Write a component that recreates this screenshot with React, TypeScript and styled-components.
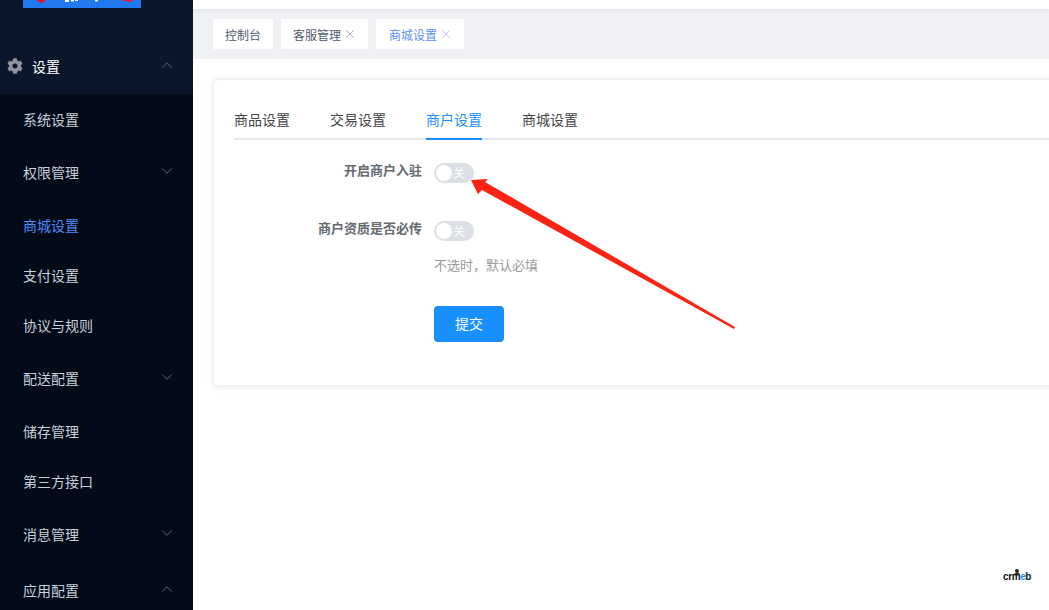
import React from "react";
import styled, { createGlobalStyle } from "styled-components";
import { ChevronDown, ChevronUp, X } from "lucide-react";
import { FaCog } from "react-icons/fa";

const GlobalStyle = createGlobalStyle`
  html, body {
    margin: 0;
    height: 100%;
    overflow: hidden;
    background: #fff;
    font-family: "Noto Sans CJK SC", "Liberation Sans", sans-serif;
  }
`;

const Page = styled.div`
  display: flex;
  width: 1049px;
  height: 610px;
  overflow: hidden;
  position: relative;
`;

const Sidebar = styled.aside`
  flex: none;
  width: 193px;
  height: 610px;
  overflow: hidden;
  background: #0a1629;
`;

const LogoBar = styled.div`
  height: 38px;
  padding-left: 23px;
`;

const LogoBlock = styled.svg`
  display: block;
  width: 118px;
  height: 8px;
`;

const GroupTitle = styled.div`
  height: 56px;
  display: flex;
  align-items: center;
  padding: 0 17px 0 7px;
  color: #fff;
  font-size: 14px;
`;

const GearIcon = styled(FaCog)`
  margin-right: 9px;
  color: #8f939b;
  font-size: 16px;
`;

const Grow = styled.span`
  flex: 1;
`;

const SubMenu = styled.div`
  background: #030a18;
`;

const MenuItem = styled.div<{ $active?: boolean; $group?: boolean }>`
  height: ${(p) => (p.$group ? 56 : 50)}px;
  display: flex;
  align-items: center;
  padding: 0 17px 0 23px;
  font-size: 14px;
  color: ${(p) => (p.$active ? "#4f8dfa" : "#c7d0da")};
`;

const Caret = styled.span`
  display: flex;
  margin-bottom: 3px;
  color: #66727f;
`;

const Main = styled.main`
  flex: 1;
  min-width: 0;
  overflow: hidden;
`;

const Header = styled.div`
  height: 9px;
  background: #fff;
  box-shadow: 0 1px 4px rgba(0, 21, 41, 0.08);
  position: relative;
`;

const TagBar = styled.div`
  height: 50px;
  box-sizing: border-box;
  background: #f0f1f5;
  padding: 10px 20px;
  display: flex;
  gap: 8px;
`;

const Tag = styled.div<{ $active?: boolean }>`
  height: 30px;
  box-sizing: border-box;
  padding: 0 12px 0 ${(p) => (p.$active ? 13 : 12)}px;
  display: flex;
  align-items: center;
  background: #fff;
  font-size: 12px;
  color: ${(p) => (p.$active ? "#5b8ff9" : "#515a6e")};
`;

const CloseIcon = styled(X)<{ $active?: boolean }>`
  margin-left: 2px;
  margin-right: -1px;
  color: ${(p) => (p.$active ? "#8fa6f5" : "#7d8796")};
`;

const Content = styled.div`
  padding: 20px;
`;

const Card = styled.section`
  width: 880px;
  height: 307px;
  box-sizing: border-box;
  padding: 19px 20px 0;
  background: #fff;
  border-radius: 4px;
  border: 1px solid #eef0f5;
  box-shadow: 0 1px 6px rgba(0, 0, 0, 0.1);
`;

const Tabs = styled.div`
  display: flex;
  gap: 40px;
  height: 39px;
  border-bottom: 2px solid #e4e7ed;
`;

const TabItem = styled.div<{ $active?: boolean }>`
  height: 39px;
  line-height: 40px;
  font-size: 14px;
  color: ${(p) => (p.$active ? "#1890ff" : "#444")};
  border-bottom: 2px solid ${(p) => (p.$active ? "#1890ff" : "transparent")};
`;

const Form = styled.div`
  padding-top: 23px;
  display: flex;
  flex-direction: column;
`;

const Row = styled.div<{ $gap: number }>`
  display: flex;
  align-items: flex-start;
  margin-bottom: ${(p) => p.$gap}px;
`;

const Label = styled.div`
  width: 200px;
  padding-right: 12px;
  box-sizing: border-box;
  text-align: right;
  font-size: 13px;
  font-weight: 700;
  line-height: 14px;
  color: #666a70;
`;

const Field = styled.div`
  display: flex;
  flex-direction: column;
  align-items: flex-start;
`;

const Switch = styled.div`
  position: relative;
  width: 40px;
  height: 20px;
  box-sizing: border-box;
  border-radius: 10px;
  background: #dcdfe6;
  color: #fff;
  font-size: 12px;
  line-height: 20px;
  padding-left: 19px;
  &::before {
    content: "";
    position: absolute;
    left: 2px;
    top: 2px;
    width: 16px;
    height: 16px;
    border-radius: 50%;
    background: #fff;
  }
`;

const Hint = styled.div`
  margin-top: 14px;
  font-size: 13px;
  line-height: 20px;
  color: #999;
`;

const SubmitButton = styled.button`
  margin-left: 200px;
  width: 70px;
  height: 36px;
  padding: 0 0 2px;
  border: 0;
  border-radius: 4px;
  background: #1890ff;
  color: #fff;
  font-family: inherit;
  font-size: 14px;
`;

const ArrowMark = styled.svg`
  position: absolute;
  left: 0;
  top: 0;
  pointer-events: none;
`;

const Brand = styled.div`
  position: absolute;
  left: 1003px;
  top: 569px;
  width: 28px;
  text-align: center;
  font-family: "Liberation Sans", sans-serif;
  font-size: 10px;
  font-weight: 700;
  line-height: 12px;
  letter-spacing: -0.4px;
  color: #111;
  padding-top: 2px;
  &::before {
    content: "";
    position: absolute;
    left: 12px;
    top: 0;
    width: 4px;
    height: 4px;
    border-radius: 50%;
    background: #222;
  }
  &::after {
    content: "";
    position: absolute;
    left: 11px;
    top: 4px;
    width: 6px;
    height: 2px;
    border-radius: 2px 2px 0 0;
    background: #222;
  }
  em {
    font-style: normal;
    color: #1890ff;
  }
`;

const menu = [
  { name: "系统设置" },
  { name: "权限管理", caret: "down" },
  { name: "商城设置", active: true },
  { name: "支付设置" },
  { name: "协议与规则" },
  { name: "配送配置", caret: "down" },
  { name: "储存管理" },
  { name: "第三方接口" },
  { name: "消息管理", caret: "down" },
  { name: "应用配置", caret: "up" },
];

const tabs = ["商品设置", "交易设置", "商户设置", "商城设置"];

export default function App() {
  return (
    <Page>
      <GlobalStyle />
      <Sidebar>
        <LogoBar>
          <LogoBlock viewBox="0 0 118 8">
            <rect width="118" height="8" fill="#2079f0" />
            <path d="M14 0h8v1l-2 1-1.500 1.500-2-1.500-2.500-1z" fill="#e8112d" />
            <path d="M42 0h4v2h-4zM48 0h3v1.500h-3zM52 0h3v1h-3zM72 0h3v1.500h-3z" fill="#fff" />
            <path d="M100 0h9v2h-3l-1-1h-5z" fill="#f0142f" />
          </LogoBlock>
        </LogoBar>
        <GroupTitle>
          <GearIcon />
          设置
          <Grow />
          <Caret>
            <ChevronUp size={18} strokeWidth={1.2} />
          </Caret>
        </GroupTitle>
        <SubMenu>
          {menu.map((item) => (
            <MenuItem key={item.name} $active={item.active} $group={!!item.caret}>
              {item.name}
              <Grow />
              {item.caret && (
                <Caret>
                  {item.caret === "down" ? (
                    <ChevronDown size={18} strokeWidth={1.2} />
                  ) : (
                    <ChevronUp size={18} strokeWidth={1.2} />
                  )}
                </Caret>
              )}
            </MenuItem>
          ))}
        </SubMenu>
      </Sidebar>
      <Main>
        <Header />
        <TagBar>
          <Tag>控制台</Tag>
          <Tag>
            客服管理
            <CloseIcon size={14} strokeWidth={1.1} />
          </Tag>
          <Tag $active>
            商城设置
            <CloseIcon $active size={14} strokeWidth={1.1} />
          </Tag>
        </TagBar>
        <Content>
          <Card>
            <Tabs>
              {tabs.map((t) => (
                <TabItem key={t} $active={t === "商户设置"}>
                  {t}
                </TabItem>
              ))}
            </Tabs>
            <Form>
              <Row $gap={38}>
                <Label>开启商户入驻</Label>
                <Field>
                  <Switch>关</Switch>
                </Field>
              </Row>
              <Row $gap={31}>
                <Label>商户资质是否必传</Label>
                <Field>
                  <Switch>关</Switch>
                  <Hint>不选时，默认必填</Hint>
                </Field>
              </Row>
              <SubmitButton>提交</SubmitButton>
            </Form>
          </Card>
        </Content>
      </Main>
      <ArrowMark width="1049" height="610" viewBox="0 0 1049 610">
        <polygon
          points="471,180 488,179 485,182 735,327 734,329 482,190 478,194"
          fill="#fb2414"
        />
      </ArrowMark>
      <Brand>
        crm<em>e</em>b
      </Brand>
    </Page>
  );
}
